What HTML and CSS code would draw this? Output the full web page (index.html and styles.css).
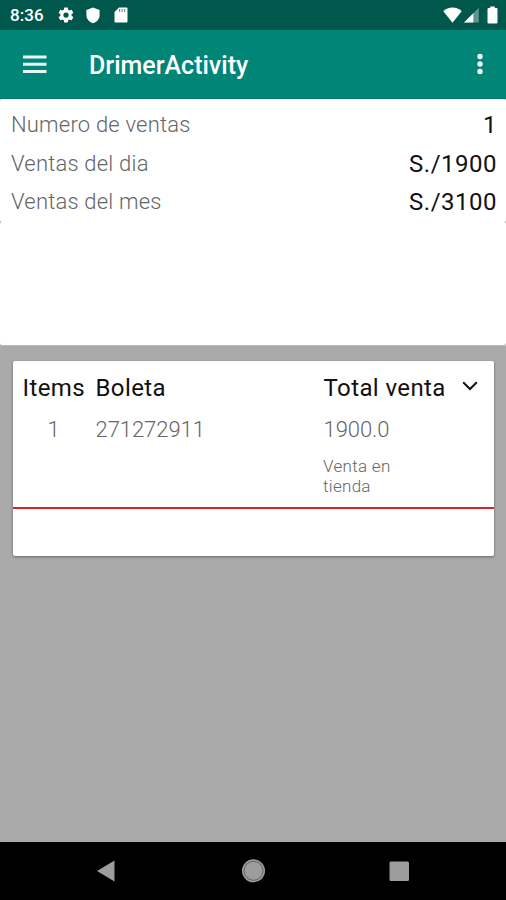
FILE: index.html
```html
<!DOCTYPE html>
<html lang="es">
<head>
<meta charset="utf-8">
<title>DrimerActivity</title>
<link rel="stylesheet" href="styles.css">
</head>
<body>
<div class="status-bar">
  <span class="clock">8:36</span>
  <svg class="gear" width="18" height="18" viewBox="0 0 24 24" fill="#fff"><path d="M19.4 13a7.500 7.500 0 0 0 0-2l2.100-1.650a.5.5 0 0 0 .12-.64l-2-3.460a.5.5 0 0 0-.61-.22l-2.490 1a7.300 7.300 0 0 0-1.690-.98l-.38-2.650A.5.5 0 0 0 14 2h-4a.5.5 0 0 0-.49.420l-.38 2.650c-.61.25-1.170.59-1.690.98l-2.490-1a.5.5 0 0 0-.61.220l-2 3.460a.5.5 0 0 0 .12.640L4.570 11a7.500 7.500 0 0 0 0 2l-2.110 1.650a.5.5 0 0 0-.12.640l2 3.460c.12.220.39.300.61.220l2.490-1c.52.400 1.080.730 1.690.980l.38 2.650c.03.240.24.420.49.420h4c.25 0 .46-.18.490-.42l.38-2.650c.61-.25 1.170-.59 1.690-.98l2.490 1c.23.090.49 0 .61-.22l2-3.460a.5.5 0 0 0-.12-.64zM12 15.500a3.500 3.500 0 1 1 0-7 3.500 3.500 0 0 1 0 7z"/></svg>
  <svg class="shield" width="14" height="17" viewBox="0 0 14 17" fill="#fff"><path d="M7 .5L13.600 3v5c0 4-2.800 7-6.600 8.300C3.200 15 .4 12 .4 8V3z"/></svg>
  <svg class="sd" width="14" height="16" viewBox="0 0 14 16"><path fill="#fff" d="M5 .5h7.500Q13.500.5 13.500 1.500v13q0 1-1 1h-11q-1 0-1-1V5z"/><path stroke="#00574b" stroke-opacity=".6" stroke-width="1.200" d="M5.600 2v3M8.100 2v3M10.600 2v3"/></svg>
  <span class="spacer"></span>
  <svg class="wifi" width="19" height="16" viewBox="0 0 19 16" fill="#fff"><path d="M9.500 15.700L.3 4.300Q4.200.6 9.500.6t9.200 3.700z"/></svg>
  <svg class="signal" width="15" height="16" viewBox="0 0 15 16"><path fill="#5d968d" d="M14.800.7v14.800H0z"/><path fill="#fff" d="M9.300 6.200v9.300H0z"/></svg>
  <svg width="11" height="18" viewBox="0 0 11 18" fill="#fff"><path d="M3.200.5h4.600v1.500h1.700q1 0 1 1v13.500q0 1-1 1h-8q-1 0-1-1v-13.500q0-1 1-1h1.700z"/></svg>
</div>
<header class="app-bar">
  <svg width="24" height="18" viewBox="0 0 24 18"><path stroke="#e9f5f3" stroke-width="3" d="M0 2h23.500M0 9.200h23.500M0 16.400h23.500"/></svg>
  <h1>DrimerActivity</h1>
  <svg width="6" height="22" viewBox="0 0 6 22" fill="#fff"><circle cx="3" cy="3.500" r="2.700"/><circle cx="3" cy="11" r="2.700"/><circle cx="3" cy="18.500" r="2.700"/></svg>
</header>
<section class="summary">
  <div class="panel totals">
    <div class="row first"><span class="label">Numero de ventas</span><b>1</b></div>
    <div class="row"><span class="label">Ventas del dia</span><b>S./1900</b></div>
    <div class="row"><span class="label">Ventas del mes</span><b>S./3100</b></div>
  </div>
  <div class="panel"></div>
</section>
<main>
  <article class="card">
    <div class="grid head"><span>Items</span><span>Boleta</span><span>Total venta</span>
      <svg width="16" height="10" viewBox="0 0 16 10"><path fill="none" stroke="#111" stroke-width="2" d="M1.200 1.300L8 8l6.800-6.700"/></svg></div>
    <div class="grid values"><span class="count">1</span><span>271272911</span><span>1900.0</span></div>
    <p>Venta en<br>tienda</p>
    <div class="divider"></div>
  </article>
</main>
<nav>
  <svg width="350" height="58" viewBox="80 842 350 58" fill="#9d9d9d"><path d="M97 871l17.500-10.500v21z"/><circle cx="253.500" cy="870.800" r="11.500"/><circle cx="253.500" cy="870.800" r="9.500" fill="none" stroke="#505050" stroke-width=".8"/><rect x="389.500" y="861.500" width="19.500" height="19.500" rx="1.500"/></svg>
</nav>
</body>
</html>
```
FILE: styles.css
```css
* { box-sizing: border-box; }
body { margin: 0; width: 506px; height: 900px; overflow: hidden; display: flex; flex-direction: column; background: #aaa; font-family: Roboto, sans-serif; color: #111; }
svg { flex: none; display: block; }
.status-bar { height: 30px; flex: none; background: #00574b; display: flex; align-items: center; padding: 0 8px 0 10px; }
.clock { width: 47px; color: #fff; font-size: 17px; font-weight: 500; line-height: 32px; white-space: nowrap; letter-spacing: .1px; }
.shield { margin-left: 11px; }
.sd { margin-left: 14px; }
.spacer { flex: 1; }
.signal { margin: 0 8px 0 2px; }
.app-bar { height: 69px; flex: none; background: #008577; border-bottom: 1px solid #00786b; display: flex; align-items: center; padding: 0 23px 0 23px; }
h1 { margin: 4px 0 0 42px; flex: 1; color: #fff; font-size: 25px; font-weight: 500; line-height: 32px; }
.summary { height: 247px; flex: none; border-bottom: 1px solid #bbb; }
.panel { height: 123px; background: #fff; border-radius: 2px; }
.totals { padding: 6px 9px 0 11px; }
.row { height: 38px; display: flex; justify-content: space-between; line-height: 38px; white-space: nowrap; }
.row.first { height: 40px; line-height: 40px; }
.label { font-size: 22px; font-weight: 300; color: #666; letter-spacing: .2px; }
.row b { font-size: 24px; font-weight: 400; letter-spacing: .5px; }
main { flex: 1; padding: 15px 12px 0 12.500px; }
.card { height: 195px; background: #fff; border-radius: 2px; box-shadow: 0 1px 3px #0006; }
.grid { display: grid; grid-template-columns: 73px 228px 138.500px 16px; padding-left: 10px; white-space: nowrap; align-items: center; }
.head { height: 54px; font-size: 24px; letter-spacing: .4px; }
.head svg { margin-top: -5px; }
.values { height: 30px; margin-top: -1px; font-size: 22px; font-weight: 300; color: #666; letter-spacing: -.05px; }
.count { padding-left: 25px; }
p { margin: 12px 0 0 310.500px; font-size: 17px; font-weight: 300; line-height: 20px; letter-spacing: .3px; color: #666; }
.divider { height: 2px; background: #d32626; margin-top: 11px; }
nav { height: 58px; flex: none; background: #000; padding-left: 80px; }
```
